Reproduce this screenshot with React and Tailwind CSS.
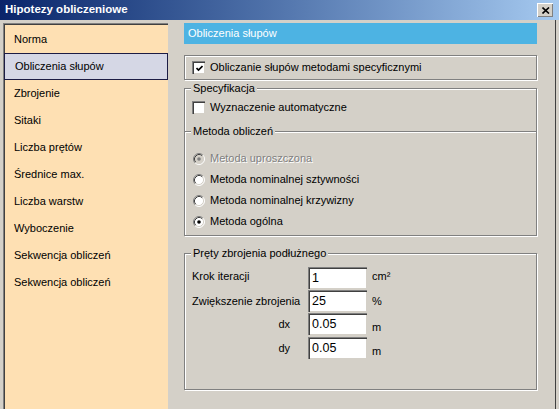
import React from 'react'

const MENU = [
  'Norma',
  'Obliczenia słupów',
  'Zbrojenie',
  'Sitaki',
  'Liczba prętów',
  'Średnice max.',
  'Liczba warstw',
  'Wyboczenie',
  'Sekwencja obliczeń',
  'Sekwencja obliczeń',
]

const METHODS = [
  { label: 'Metoda uproszczona', disabled: true },
  { label: 'Metoda nominalnej sztywności' },
  { label: 'Metoda nominalnej krzywizny' },
  { label: 'Metoda ogólna', checked: true },
]

function Checkbox({ checked }) {
  return (
    <span className="w-[13px] h-[13px] shrink-0 bg-white border-t border-l border-[#808080] border-r-white border-b-white shadow-[inset_1px_1px_0_#404040,inset_-1px_-1px_0_#d4d0c8] flex items-center justify-center">
      {checked && (
        <svg width="7" height="7" viewBox="0 0 7 7">
          <path d="M0.5 3 L2.5 5 L6.5 1" fill="none" stroke="#000" strokeWidth="1.7" />
        </svg>
      )}
    </span>
  )
}

function Radio({ checked, disabled }) {
  return (
    <svg width="12" height="12" viewBox="0 0 12 12" className="shrink-0">
      <circle cx="6" cy="6" r="5" fill={disabled ? '#d4d0c8' : '#fff'} />
      <path d="M9.89 2.11 A5.5 5.5 0 0 0 2.11 9.89" fill="none" stroke="#808080" />
      <path d="M2.11 9.89 A5.5 5.5 0 0 0 9.89 2.11" fill="none" stroke="#fff" />
      <path d="M9.18 2.82 A4.5 4.5 0 0 0 2.82 9.18" fill="none" stroke="#404040" />
      <path d="M2.82 9.18 A4.5 4.5 0 0 0 9.18 2.82" fill="none" stroke="#d4d0c8" />
      {(checked || disabled) && <circle cx="6" cy="6" r="1.8" fill={disabled ? '#808080' : '#000'} />}
    </svg>
  )
}

function Legend({ children }) {
  return (
    <span className="absolute -top-[7px] left-[6px] px-[2px] bg-[#d4d0c8] leading-[13px]">{children}</span>
  )
}

function Field({ value }) {
  return (
    <div className="w-[59px] h-[22px] bg-white border-t border-l border-[#808080] border-r-white border-b-white shadow-[inset_1px_1px_0_#404040,inset_-1px_-1px_0_#d4d0c8] pl-[3px] pt-[3px] text-[12.5px] leading-[14px]">
      {value}
    </div>
  )
}

export default function App() {
  return (
    <div className="w-[559px] h-[409px] bg-[#d4d0c8] flex flex-col overflow-hidden text-[11px] text-black font-['Liberation_Sans',Arial,sans-serif] shadow-[inset_-3px_0_0_#d4d0c8,inset_-4px_0_0_#404040]">
      {/* Pasek tytułu */}
      <div className="h-[20px] shrink-0 bg-linear-to-r from-[#0a246a] to-[#a6caf0] flex items-center pl-[5px] pr-[6px]">
        <span className="text-white font-bold text-[11.5px] flex-1">Hipotezy obliczeniowe</span>
        <span className="w-[16px] h-[14px] bg-[#d4d0c8] border-t border-l border-white border-r-[#404040] border-b-[#404040] shadow-[inset_-1px_-1px_0_#808080] flex items-center justify-center">
          <svg width="8" height="7" viewBox="0 0 8 7">
            <path d="M0.5 0.5 L7 6.5 M7 0.5 L0.5 6.5" stroke="#000" strokeWidth="1.6" />
          </svg>
        </span>
      </div>

      <div className="flex flex-1 pt-[3px] min-h-0">
        {/* Menu */}
        <div className="w-[165px] ml-[3px] bg-[#fee0b3] border-t border-l border-[#808080] border-r-white border-b-white shadow-[inset_1px_1px_0_#404040] pt-[2px] flex flex-col">
          {MENU.map((m, i) => (
            <div
              key={i}
              className={`h-[27px] shrink-0 flex items-center pl-[10px] ${i === 1 ? 'bg-[#d5d7e5] border border-[#1c1c44] pl-[9px]' : ''}`}
            >
              {m}
            </div>
          ))}
        </div>

        {/* Prawa strona */}
        <div className="w-[353px] ml-[16px] flex flex-col">
          <div className="h-[21px] bg-[#4db3e3] text-white flex items-center pl-[4px] pb-[1px]">Obliczenia słupów</div>

          <div className="mt-[11px] h-[25px] border border-[#808080] shadow-[inset_1px_1px_0_#fff,1px_1px_0_#fff] flex items-center pl-[7px] gap-[5px]">
            <Checkbox checked />
            <span>Obliczanie słupów metodami specyficznymi</span>
          </div>

          {/* Specyfikacja */}
          <div className="relative mt-[8px] h-[148px] border border-[#808080] shadow-[inset_1px_1px_0_#fff,1px_1px_0_#fff] pt-[11px]">
            <Legend>Specyfikacja</Legend>
            <div className="h-[15px] flex items-center pl-[7px] gap-[5px]">
              <Checkbox />
              <span>Wyznaczenie automatyczne</span>
            </div>
            <div className="relative mt-[16px] border-t border-[#808080] shadow-[0_1px_0_#fff]">
              <Legend>Metoda obliczeń</Legend>
            </div>
            <div className="mt-[16px] flex flex-col">
              {METHODS.map(r => (
                <div key={r.label} className="h-[21px] flex items-center pl-[8px] gap-[5px]">
                  <Radio checked={r.checked} disabled={r.disabled} />
                  <span className={r.disabled ? 'text-[#808080] [text-shadow:1px_1px_0_#fff]' : ''}>{r.label}</span>
                </div>
              ))}
            </div>
          </div>

          {/* Pręty zbrojenia podłużnego */}
          <div className="relative mt-[17px] h-[137px] border border-[#808080] shadow-[inset_1px_1px_0_#fff,1px_1px_0_#fff] pt-[13px] pl-[7px]">
            <Legend>Pręty zbrojenia podłużnego</Legend>
            <div className="grid grid-cols-[116px_59px_auto] gap-y-[1px] items-center">
              <span className="-mt-[3px]">Krok iteracji</span>
              <Field value="1" />
              <span className="pl-[5px] -mt-[3px]">cm²</span>

              <span>Zwiększenie zbrojenia</span>
              <Field value="25" />
              <span className="pl-[5px]">%</span>

              <span className="text-right pr-[18px]">dx</span>
              <Field value="0.05" />
              <span className="pl-[5px] mt-[6px]">m</span>

              <span className="text-right pr-[18px]">dy</span>
              <Field value="0.05" />
              <span className="pl-[5px] mt-[6px]">m</span>
            </div>
          </div>
        </div>
      </div>
    </div>
  )
}
